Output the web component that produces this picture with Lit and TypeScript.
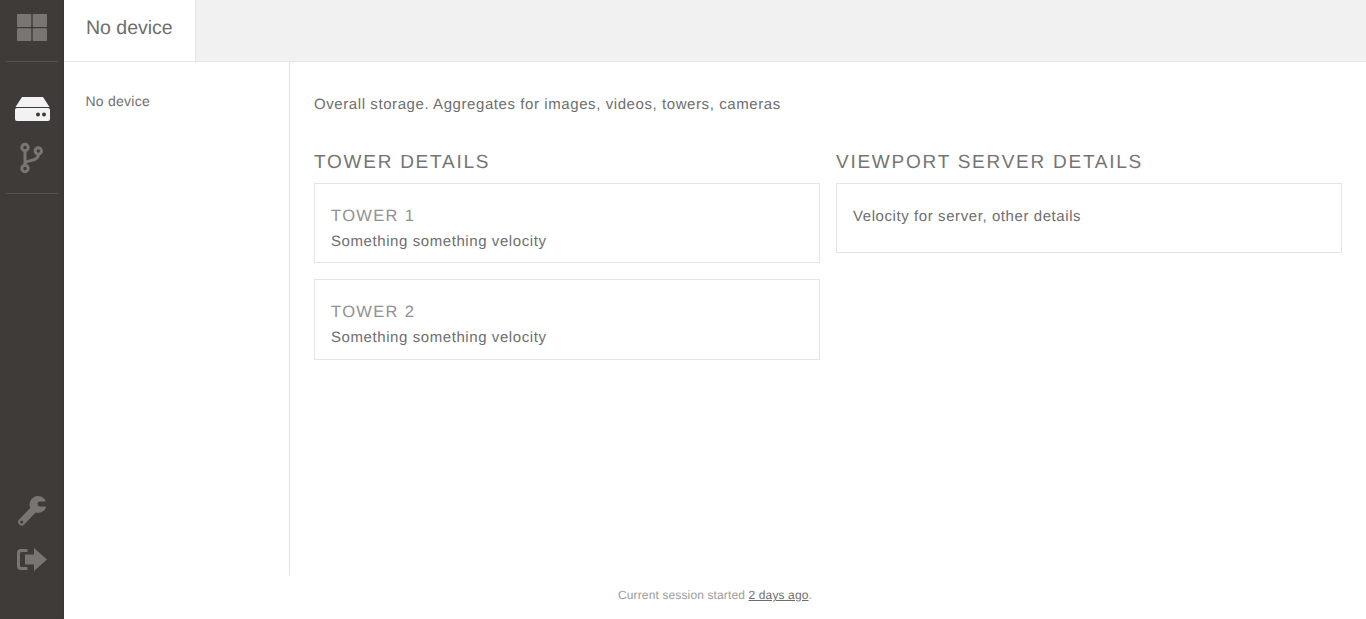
import { LitElement, html, css } from "lit";
import { customElement } from "lit/decorators.js";

@customElement("app-root")
export class AppRoot extends LitElement {
  static styles = css`
    :host {
      display: flex;
      height: 619px;
      overflow: hidden;
      font-family: "Liberation Sans", Arial, sans-serif;
      text-rendering: geometricPrecision;
      color: #6e6e6e;
      background: #fff;
    }
    .rail {
      width: 64px;
      flex: none;
      background: #3e3b39;
      box-shadow: inset -3px 0 3px -2px rgba(0, 0, 0, 0.12);
      display: flex;
      flex-direction: column;
      align-items: center;
    }
    .rail svg { display: block; }
    .brand { height: 61px; box-sizing: border-box; padding-bottom: 7px; display: flex; align-items: center; justify-content: center; width: 100%; }
    .sep { width: 52px; height: 1px; background: #555250; flex: none; }
    .group { display: flex; flex-direction: column; align-items: center; gap: 21px; padding: 35px 0 18px; }
    .bottom { margin-top: auto; display: flex; flex-direction: column; align-items: center; gap: 21px; padding-bottom: 48px; }
    .content { flex: 1; min-width: 0; display: flex; flex-direction: column; }
    .tabs { height: 62px; box-sizing: border-box; flex: none; background: #f1f1f1; border-bottom: 1px solid #e6e6e6; display: flex; }
    .tab {
      width: 132px; box-sizing: border-box; height: 61px; background: #fff;
      border-right: 1px solid #e6e6e6; padding-left: 22px; font-size: 19.5px; line-height: 57px; color: #6e6e6e;
    }
    .body { height: 513px; flex: none; display: flex; }
    .devices {
      width: 226px; flex: none; box-sizing: border-box; border-right: 1px solid #e4e4e4;
      padding: 31px 0 0 21.5px; font-size: 14px; line-height: 16px; letter-spacing: 0.25px;
    }
    .main { flex: 1; min-width: 0; padding: 33px 24px 0; }
    .intro { font-size: 15px; line-height: 20px; letter-spacing: 0.58px; margin: 0 0 36px; }
    .cols { display: grid; grid-template-columns: 506px 506px; gap: 16px; align-items: start; }
    h2 { margin: 0 0 8.9px; font-weight: 400; font-size: 19px; line-height: 23px; letter-spacing: 1.75px; color: #747474; text-transform: uppercase; }
    .card { border: 1px solid #e4e4e4; height: 80.4px; padding: 22px 16px 0; margin-bottom: 16px; box-sizing: border-box; }
    .card.server { height: 70px; padding-top: 23px; }
    h3 { margin: 0 0 6px; font-weight: 400; font-size: 16.500px; line-height: 20px; letter-spacing: 1.35px; color: #919191; text-transform: uppercase; }
    .card p { margin: 0; font-size: 15px; line-height: 20px; letter-spacing: 0.58px; }
    footer { flex: 1; text-align: center; font-size: 12px; line-height: 14px; letter-spacing: 0.13px; color: #9c9c9c; padding-top: 13px; }
    footer a { color: #6e6e6e; text-decoration: underline; }
  `;

  render() {
    return html`
      <nav class="rail">
        <div class="brand">
          <svg width="30" height="27" viewBox="0 0 30 27" fill="#787573">
            <rect x="0" y="0" width="14.300" height="13" rx="1"/>
            <rect x="15.700" y="0" width="14.300" height="13" rx="1"/>
            <rect x="0" y="14.300" width="14.300" height="12.700" rx="1"/>
            <rect x="15.700" y="14.300" width="14.300" height="12.700" rx="1"/>
          </svg>
        </div>
        <div class="sep"></div>
        <div class="group">
          <svg width="35" height="24" viewBox="0 0 35 24">
            <path fill="#f2f2f2" d="M7 0h21l6.500 10H.5z"/>
            <path fill="#f2f2f2" d="M2 11h31a2 2 0 0 1 2 2v9a2 2 0 0 1-2 2H2a2 2 0 0 1-2-2v-9a2 2 0 0 1 2-2z"/>
            <circle cx="23" cy="17.500" r="2" fill="#3e3b39"/>
            <circle cx="29" cy="17.500" r="2" fill="#3e3b39"/>
          </svg>
          <svg width="26" height="33" viewBox="0 0 26 33" fill="none" stroke="#787573" stroke-width="3">
            <path d="M6 9v16M6.500 21c1-3.500 12.500-1 13-8.500"/>
            <circle cx="6" cy="5.500" r="3.200"/>
            <circle cx="19.300" cy="9" r="3.200"/>
            <circle cx="6" cy="26.500" r="3.200"/>
          </svg>
        </div>
        <div class="sep"></div>
        <div class="bottom">
          <svg width="30" height="32" viewBox="0 0 30 32">
            <path stroke="#787573" stroke-width="7" stroke-linecap="round" d="M4.700 27 18 13"/>
            <circle cx="21" cy="9.500" r="8.500" fill="#787573"/>
            <path fill="#3e3b39" d="M30 6.500h-7a2.500 2.500 0 0 0 0 5h7z"/>
            <circle cx="4.700" cy="27" r="1.500" fill="#3e3b39"/>
          </svg>
          <svg width="30" height="23" viewBox="0 0 30 23" fill="#787573">
            <path d="M4 1h6.500v3H4.500a1.500 1.500 0 0 0-1.500 1.500v12A1.500 1.500 0 0 0 4.500 19h6v3H4a4 4 0 0 1-4-4V5a4 4 0 0 1 4-4z"/>
            <path d="M17 0l13 11.500L17 23v-6.500H8v-10h9z"/>
          </svg>
        </div>
      </nav>
      <div class="content">
        <div class="tabs"><div class="tab">No device</div></div>
        <div class="body">
          <aside class="devices">No device</aside>
          <section class="main">
            <p class="intro">Overall storage. Aggregates for images, videos, towers, cameras</p>
            <div class="cols">
              <div>
                <h2>Tower details</h2>
                <div class="card"><h3>Tower 1</h3><p>Something something velocity</p></div>
                <div class="card"><h3>Tower 2</h3><p>Something something velocity</p></div>
              </div>
              <div>
                <h2>Viewport server details</h2>
                <div class="card server"><p>Velocity for server, other details</p></div>
              </div>
            </div>
          </section>
        </div>
        <footer>Current session started <a href="#">2 days ago</a>.</footer>
      </div>
    `;
  }
}
